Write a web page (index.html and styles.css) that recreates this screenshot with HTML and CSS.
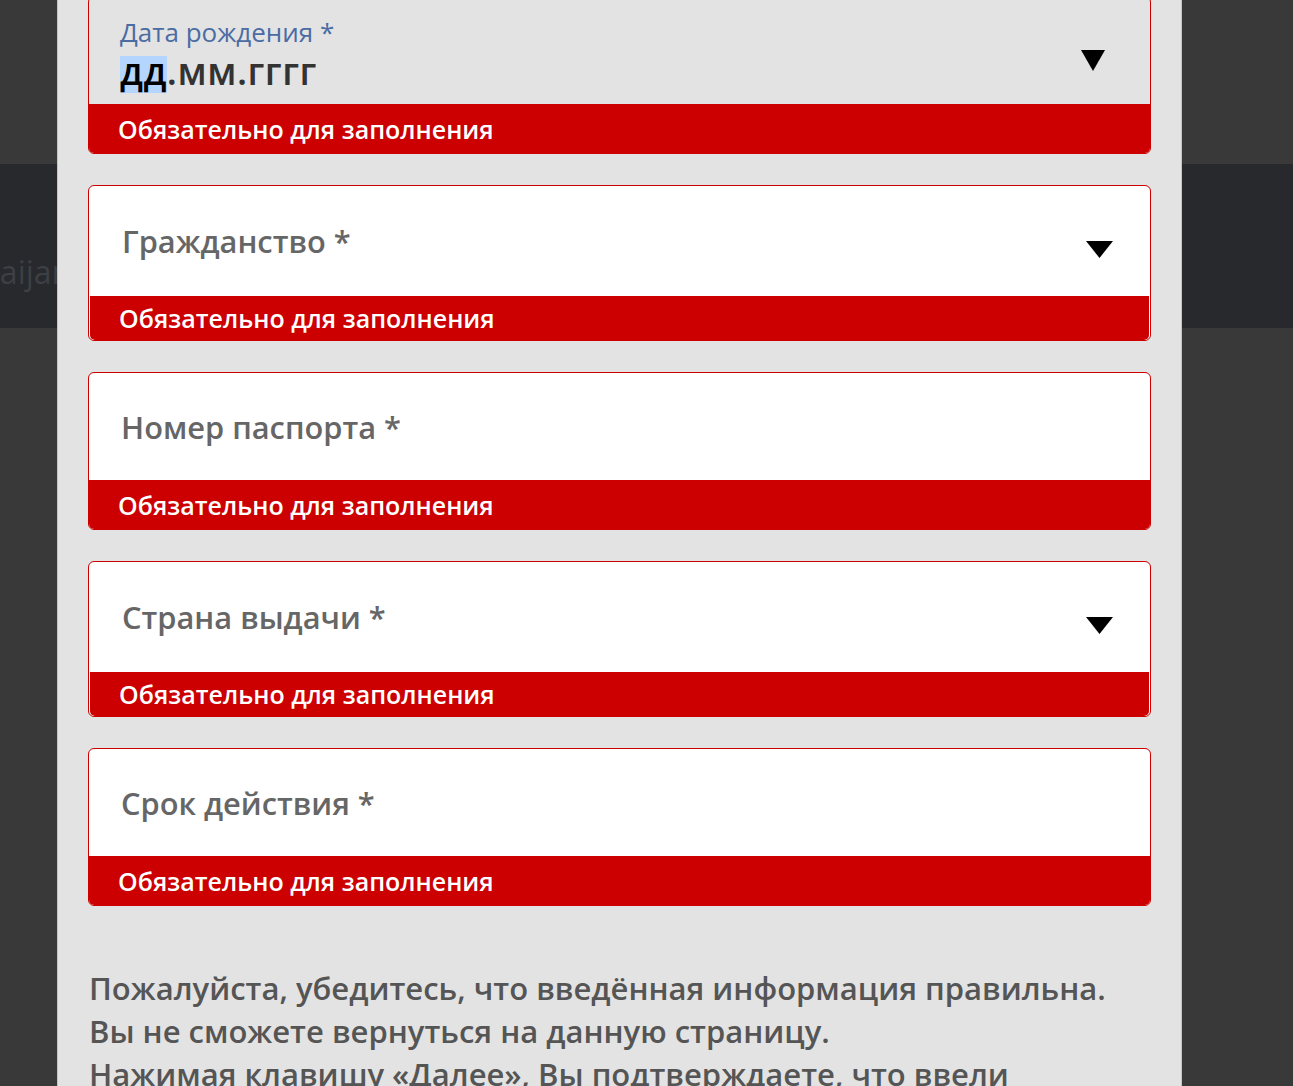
FILE: index.html
```html
<!DOCTYPE html>
<html lang="ru">
<head>
<meta charset="utf-8">
<title>Данные паспорта</title>
<link rel="stylesheet" href="styles.css">
</head>
<body>
<div class="page">
  <div class="page-top"></div>
  <div class="band"><span class="band-text">Azerbaijan</span></div>
  <div class="page-rest"></div>
</div>

<div class="modal">
  <div class="form">
    <div class="field field-date">
      <div class="field-main field-main-date">
        <div class="date-col">
          <div class="date-label">Дата рождения *</div>
          <div class="date-value"><span class="sel">дд</span>.мм.гггг</div>
        </div>
        <svg class="caret caret-date" width="24" height="21" viewBox="0 0 24 21"><polygon points="0,0 24,0 12,21" fill="#000"/></svg>
      </div>
      <div class="field-error">Обязательно для заполнения</div>
    </div>

    <div class="field field-select">
      <div class="field-main field-main-select">
        <span class="label">Гражданство *</span>
        <svg class="caret" width="27" height="17" viewBox="0 0 27 17"><polygon points="0,0 27,0 13.5,17" fill="#000"/></svg>
      </div>
      <div class="field-error field-error-select">Обязательно для заполнения</div>
    </div>

    <div class="field">
      <div class="field-main">
        <span class="label">Номер паспорта *</span>
      </div>
      <div class="field-error">Обязательно для заполнения</div>
    </div>

    <div class="field field-select">
      <div class="field-main field-main-select">
        <span class="label">Страна выдачи *</span>
        <svg class="caret" width="27" height="17" viewBox="0 0 27 17"><polygon points="0,0 27,0 13.5,17" fill="#000"/></svg>
      </div>
      <div class="field-error field-error-select">Обязательно для заполнения</div>
    </div>

    <div class="field">
      <div class="field-main">
        <span class="label">Срок действия *</span>
      </div>
      <div class="field-error">Обязательно для заполнения</div>
    </div>
  </div>

  <p class="notice">Пожалуйста, убедитесь, что введённая информация правильна.<br>Вы не сможете вернуться на данную страницу.<br>Нажимая клавишу «Далее», Вы подтверждаете, что ввели правильные данные.</p>
</div>
</body>
</html>
```

FILE: styles.css
```css
html, body {
  margin: 0;
  padding: 0;
}

body {
  width: 1293px;
  height: 1086px;
  overflow: hidden;
  background: #393939;
  font-family: "Open Sans", "Noto Sans", "Liberation Sans", sans-serif;
  position: relative;
}

.page {
  display: flex;
  flex-direction: column;
  height: 100%;
}

.page-top {
  height: 164px;
  background: #393939;
}

.band {
  height: 164px;
  background: #27292d;
  display: flex;
  align-items: center;
  overflow: hidden;
}

.band-text {
  margin-left: -86px;
  margin-top: 50px;
  font-size: 32px;
  color: #3c3f44;
  white-space: nowrap;
}

.page-rest {
  flex: 1;
  background: #393939;
}

.modal {
  position: absolute;
  left: 57px;
  top: -4px;
  bottom: 0;
  width: 1063px;
  padding: 0 30px;
  background: #e3e3e3;
  border-left: 1px solid #c4c4c4;
  border-right: 1px solid #c4c4c4;
}

.form {
  display: flex;
  flex-direction: column;
  gap: 31px;
}

.field {
  border: 1px solid #cc0000;
  border-radius: 6px;
  overflow: hidden;
  background: #ffffff;
}

.field-date {
  background: #e3e3e3;
}

.field-select {
  padding: 0 1px;
}

.field-main {
  height: 107px;
  display: flex;
  align-items: center;
  justify-content: space-between;
  padding: 0 31px 0 32px;
}

.field-main-select {
  height: 110px;
  padding: 0 36px 0 32px;
}

.field-main-date {
  align-items: flex-start;
  padding: 0 45px 0 31px;
}

.date-col {
  padding-top: 19px;
}

.date-label {
  font-size: 26px;
  font-weight: 500;
  color: #4b6ca3;
  line-height: 33px;
}

.date-value {
  margin-top: 7px;
  font-size: 37px;
  font-weight: 600;
  color: #333333;
  line-height: 30px;
  letter-spacing: 0.5px;
}

.sel {
  display: inline-block;
  line-height: 30px;
  padding-bottom: 7px;
  background: #b4d5fe;
  color: #000000;
}

.caret {
  display: block;
  margin-top: 17px;
}

.caret-date {
  margin-top: 53px;
}

.label {
  font-size: 30.8px;
  font-weight: 600;
  color: #666666;
}

.field-error {
  height: 49px;
  display: flex;
  align-items: center;
  padding-left: 29px;
  background: #cc0000;
  color: #ffffff;
  font-size: 25px;
  font-weight: 600;
}

.field-error-select {
  height: 44px;
  padding-left: 29px;
  border-radius: 0 0 5px 5px;
}

.notice {
  margin: 61px 0 0 1px;
  font-size: 31px;
  font-weight: 600;
  line-height: 43px;
  color: #555555;
}
```
